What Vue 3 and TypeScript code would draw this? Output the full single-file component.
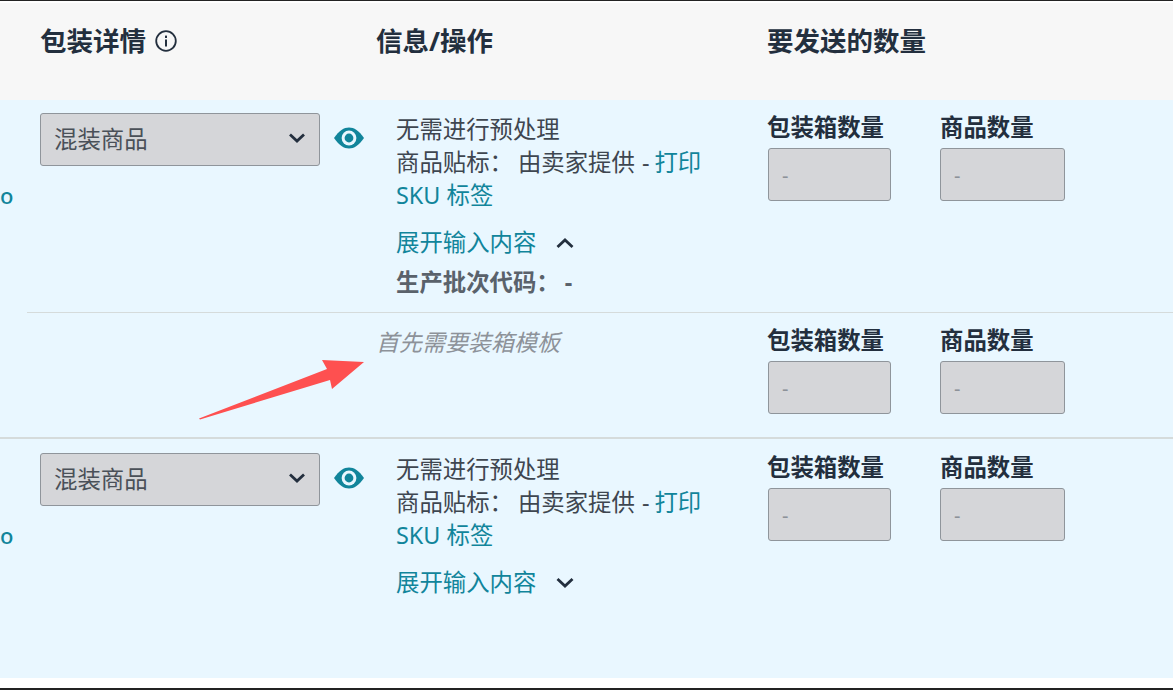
<template>
  <div class="page">
    <div class="head">
      <div class="h-spacer"></div>
      <div class="h-pack">
        <span>包装详情</span>
        <svg class="info" width="22" height="22" viewBox="0 0 22 22">
          <circle cx="11" cy="11" r="9.8" fill="none" stroke="#232f3e" stroke-width="1.8" />
          <rect x="10" y="9.5" width="2" height="7" fill="#232f3e" />
          <rect x="10" y="5.6" width="2" height="2.4" fill="#232f3e" />
        </svg>
      </div>
      <div class="h-info">信息/操作</div>
      <div class="h-qty">要发送的数量</div>
    </div>

    <div class="body">
      <div v-for="row in rows" :key="row.id" class="group">
        <div class="row">
          <div class="cut"><span>o</span></div>
          <div class="pack">
            <div class="select">
              <span>混装商品</span>
              <svg width="18" height="12" viewBox="0 0 18 12">
                <path d="M2 2.5 L9 9 L16 2.5" fill="none" stroke="#232f3e" stroke-width="2.8" />
              </svg>
            </div>
            <svg class="eye" width="32" height="22" viewBox="0 0 32 22">
              <path d="M1 11 C6 3.5 11 0.5 16 0.5 C21 0.5 26 3.5 31 11 C26 18.5 21 21.5 16 21.5 C11 21.5 6 18.5 1 11 Z" fill="#11859b" />
              <circle cx="16" cy="11" r="7.4" fill="#e9f7ff" />
              <circle cx="16" cy="11" r="4.4" fill="#11859b" />
            </svg>
          </div>
          <div class="info-col">
            <div>无需进行预处理</div>
            <div class="wrap-line">商品贴标：<span class="by">由卖家提供</span><span class="sep">-</span><a>打印 SKU 标签</a></div>
            <div class="expand">
              <a>展开输入内容</a>
              <svg width="20" height="12" viewBox="0 0 20 12">
                <path v-if="row.open" d="M2.5 10 L10 3 L17.5 10" fill="none" stroke="#232f3e" stroke-width="2.8" />
                <path v-else d="M2.5 2 L10 9 L17.5 2" fill="none" stroke="#232f3e" stroke-width="2.8" />
              </svg>
            </div>
            <div v-if="row.open" class="batch"><b>生产批次代码：</b><b class="dash">-</b></div>
          </div>
          <div class="qty">
            <div class="field">
              <label>包装箱数量</label>
              <div class="input box">-</div>
            </div>
            <div class="field">
              <label>商品数量</label>
              <div class="input item">-</div>
            </div>
          </div>
        </div>

        <div v-if="row.open" class="sub">
          <div class="sub-note">首先需要装箱模板</div>
          <div class="qty sub-qty">
            <div class="field">
              <label>包装箱数量</label>
              <div class="input box">-</div>
            </div>
            <div class="field">
              <label>商品数量</label>
              <div class="input item">-</div>
            </div>
          </div>
          <svg class="arrow" width="175" height="68" viewBox="0 0 175 68">
            <polygon points="5,62.5 133,13 128,4 170,6 138,33 136,24 6,63.5" fill="#fe5050" />
          </svg>
        </div>
      </div>
    </div>
    <div class="foot"></div>
  </div>
</template>

<script setup lang="ts">
const rows = [
  { id: 1, open: true },
  { id: 2, open: false },
]
</script>

<style>
html, body {
  margin: 0;
  background: #fff;
}
</style>

<style scoped>
.page {
  width: 1173px;
  height: 690px;
  overflow: hidden;
  display: flex;
  flex-direction: column;
  box-sizing: border-box;
  border-top: 1px solid #232323;
  border-bottom: 2px solid #232323;
  font-family: "Noto Sans", "Noto Sans CJK SC", sans-serif;
  font-size: 23.4px;
  color: #3e4650;
}
.head {
  height: 97px;
  margin-top: 2px;
  flex: none;
  display: flex;
  background: #f7f7f7;
  font-size: 26.5px;
  font-weight: 700;
  color: #232f3e;
  line-height: 36px;
  padding-top: 20px;
  box-sizing: border-box;
}
.h-spacer { width: 40px; }
.h-pack {
  width: 336px;
  display: flex;
  align-items: center;
  align-self: flex-start;
  gap: 9px;
}
.info { margin-top: -1px; }
.h-info { width: 391px; }
.body {
  flex: none;
  height: 578px;
  background: #e9f7ff;
}
.group:first-child {
  border-bottom: 2px solid #d5dbdb;
  height: 339px;
  box-sizing: border-box;
}
.group + .group { padding-top: 1px; }
.row {
  display: flex;
  padding-top: 13px;
}
.group:first-child .row { height: 199px; }
.cut {
  width: 40px;
  flex: none;
  padding-top: 64px;
  overflow: hidden;
  color: #11859b;
  font-size: 22px;
  font-weight: 500;
  line-height: 36px;
}
.pack {
  width: 336px;
  flex: none;
  display: flex;
  align-items: flex-start;
}
.select {
  width: 280px;
  height: 53px;
  box-sizing: border-box;
  border: 1px solid #8f959b;
  border-radius: 3px;
  background: #d5d6d9;
  display: flex;
  align-items: center;
  justify-content: space-between;
  padding: 0 13px 4px;
  color: #4a5058;
}
.eye {
  margin: 14px 0 0 13px;
}
.info-col {
  width: 371px;
  flex: none;
  margin-left: 20px;
  line-height: 33px;
}
.wrap-line { width: 320px; }
.by { margin-left: 5px; }
.sep { margin: 0 5px 0 7px; }
a { color: #11859b; }
.expand {
  display: flex;
  align-items: center;
  gap: 19px;
  margin-top: 14px;
}
.batch {
  margin-top: 7px;
  color: #5a626b;
}
.dash { margin-left: 5px; }
.qty {
  display: flex;
}
.field label {
  display: block;
  font-weight: 700;
  color: #232f3e;
  line-height: 30px;
  margin-top: -1px;
}
.field { margin-right: 49px; }
.input {
  height: 53px;
  margin-top: 6px;
  box-sizing: border-box;
  border: 1px solid #8f959b;
  border-radius: 3px;
  background: #d5d6d9;
  color: #8d9299;
  padding: 9px 13px;
  font-size: 20px;
  line-height: 36px;
}
.box { width: 123px; margin-left: 1px; }
.item { width: 125px; }
.sub {
  position: relative;
  height: 125px;
  margin-left: 27px;
  border-top: 1px solid #d5dbdb;
  box-sizing: border-box;
  display: flex;
}
.sub-note {
  width: 391px;
  flex: none;
  margin-left: 349px;
  margin-top: 12px;
  font-size: 23px;
  font-style: italic;
  color: #8d9299;
  line-height: 34px;
}
.sub-qty { margin-top: 13px; }
.arrow {
  position: absolute;
  left: 167px;
  top: 43px;
}
.foot { flex: 1; }
</style>
